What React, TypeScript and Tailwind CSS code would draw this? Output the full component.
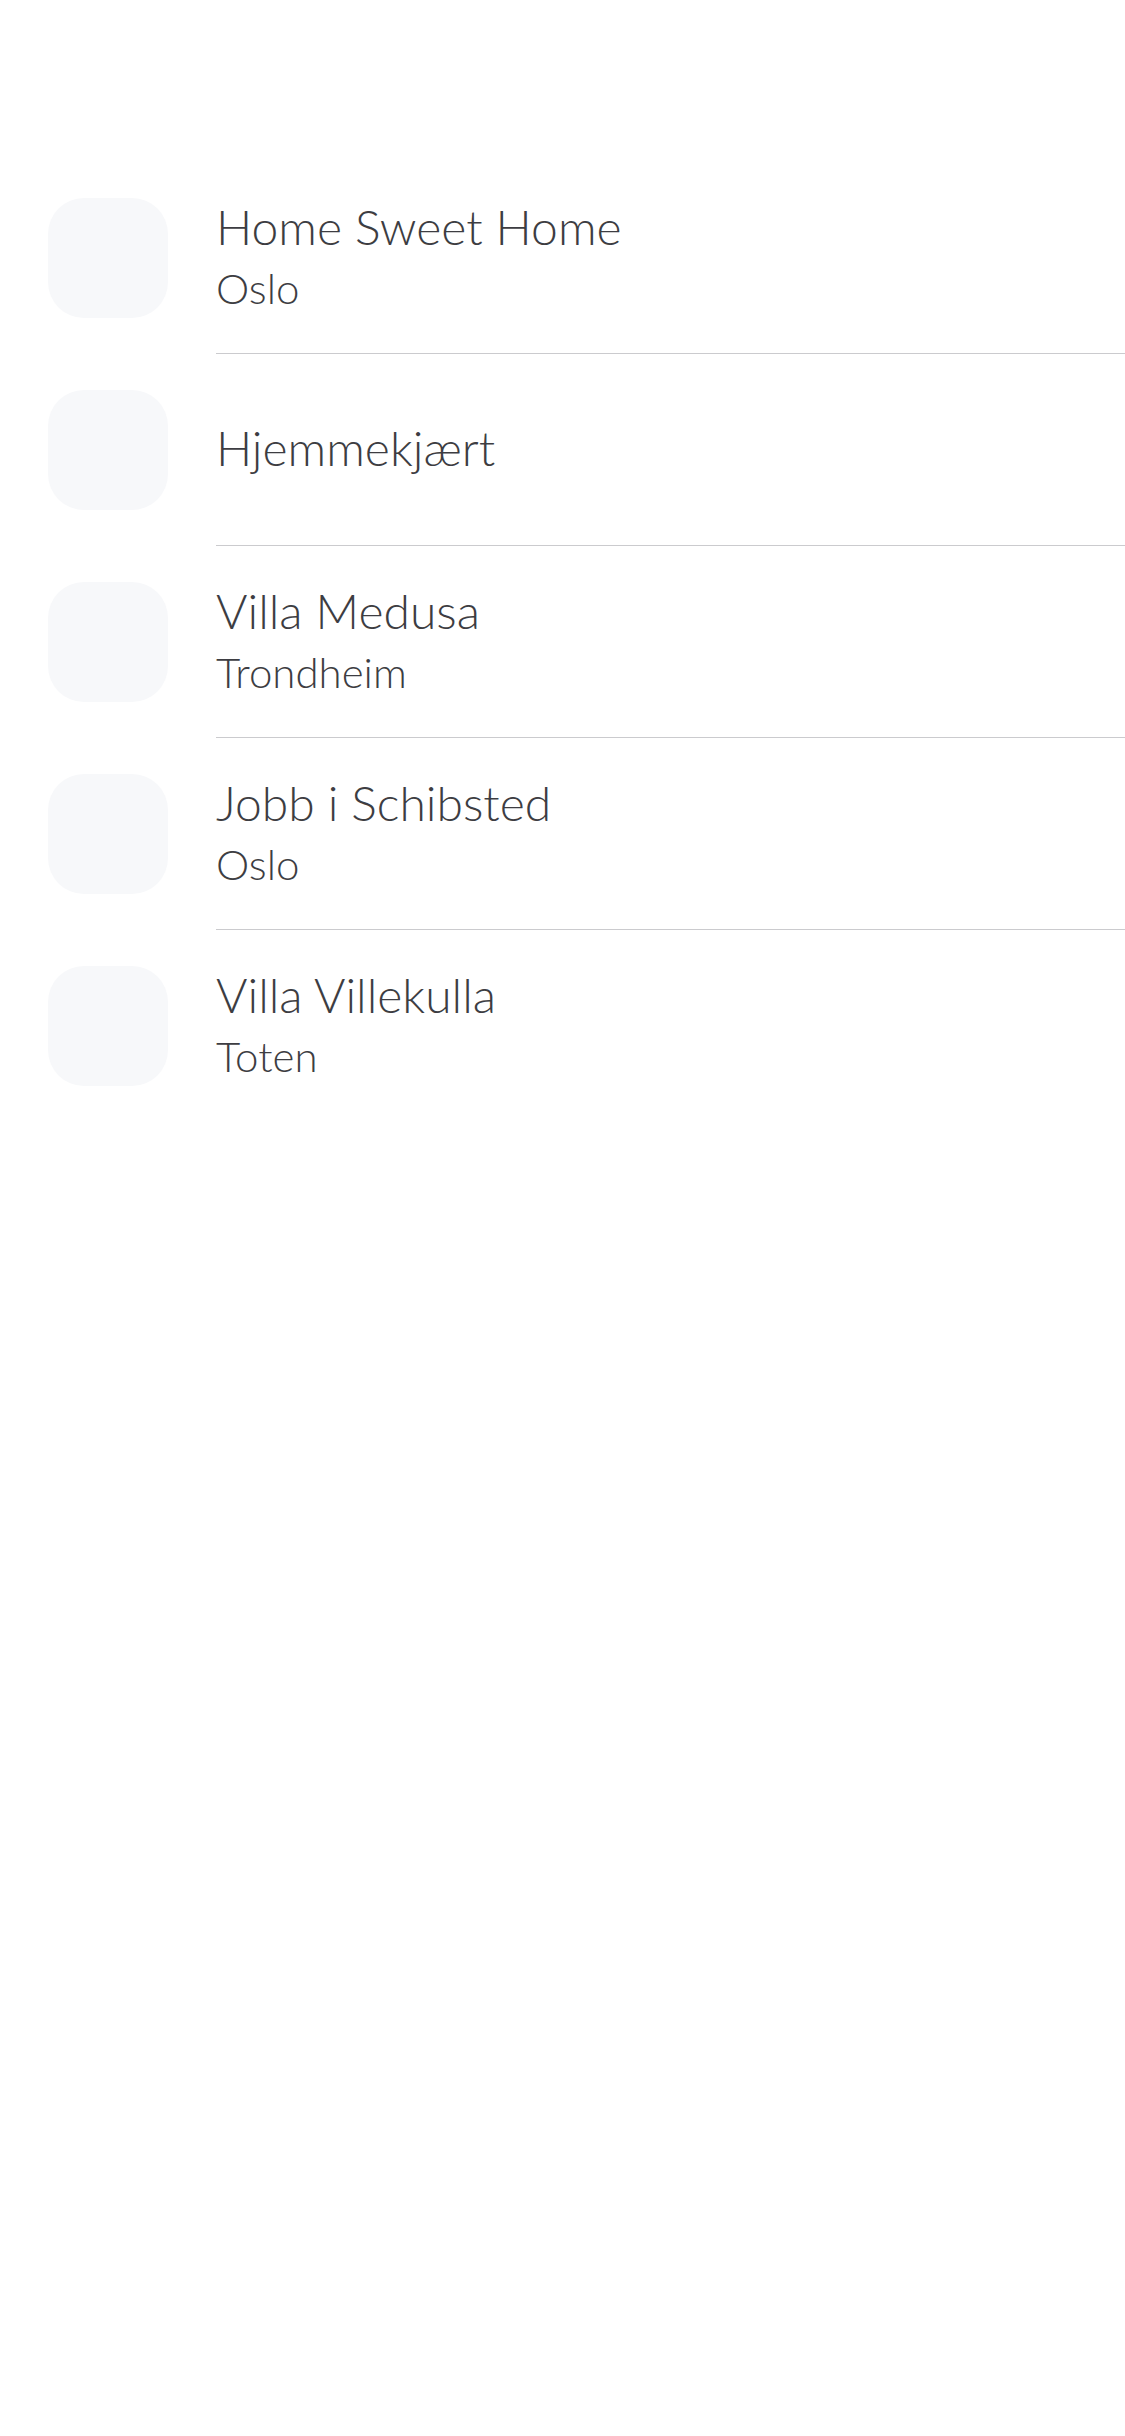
import React from "react";

const items = [
  { title: "Home Sweet Home", sub: "Oslo" },
  { title: "Hjemmekjært", sub: "" },
  { title: "Villa Medusa", sub: "Trondheim" },
  { title: "Jobb i Schibsted", sub: "Oslo" },
  { title: "Villa Villekulla", sub: "Toten" },
];

export default function App() {
  return (
    <div
      className="w-[1125px] min-h-[2436px] bg-white pt-[162px]"
      style={{ fontFamily: "Lato, 'Liberation Sans', sans-serif" }}
    >
      {items.map((it, i) => (
        <div key={i} className="flex h-[192px] items-stretch pl-[48px]">
          <div className="flex items-center">
            <div className="h-[120px] w-[120px] rounded-[36px] bg-[#f7f8fa]" />
          </div>
          <div
            className={
              "ml-[48px] flex flex-1 flex-col justify-center " +
              (it.sub ? "pb-[3px] " : "pb-[3px] ") +
              (i < items.length - 1 ? "border-b border-[#cbcbce]" : "")
            }
          >
            <div className="text-[48px] font-light leading-[56px] text-[#3d3d42]">
              {it.title}
            </div>
            {it.sub && (
              <div className="mt-[7px] text-[42px] font-light leading-[52px] text-[#3d3d42]">
                {it.sub}
              </div>
            )}
          </div>
        </div>
      ))}
    </div>
  );
}
